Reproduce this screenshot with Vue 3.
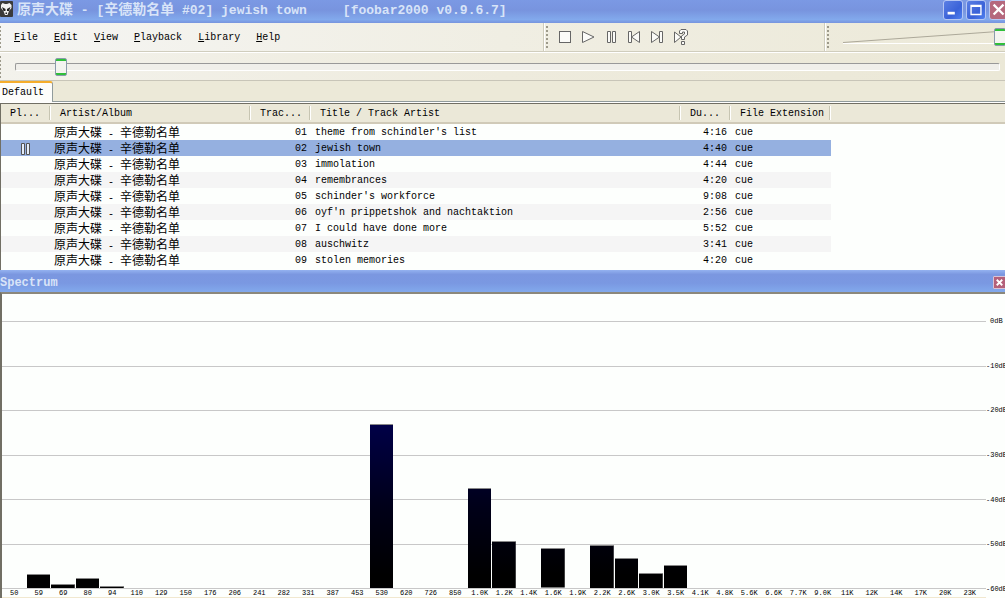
<script setup>
import { ref } from 'vue'

const menus = ['File', 'Edit', 'View', 'Playback', 'Library', 'Help']
const position = ref(4)
const volume = ref(100)

const tracks = [
  ['01', "theme from schindler's list", '4:16'],
  ['02', 'jewish town', '4:40'],
  ['03', 'immolation', '4:44'],
  ['04', 'remembrances', '4:20'],
  ['05', "schinder's workforce", '9:08'],
  ['06', "oyf'n prippetshok and nachtaktion", '2:56'],
  ['07', 'I could have done more', '5:52'],
  ['08', 'auschwitz', '3:41'],
  ['09', 'stolen memories', '4:20'],
]
const current = '02'

const labels = (
  '50 59 69 80 94 110 129 150 176 206 241 282 331 387 453 530 620 726 850 1.0K ' +
  '1.2K 1.4K 1.6K 1.9K 2.2K 2.6K 3.0K 3.5K 4.1K 4.8K 5.6K 6.6K 7.7K 9.0K 11K 12K 14K 17K 20K 23K'
).split(' ')
// Level of each sounding band, as a percentage of the 60 dB range
const levels = {
  59: 5.4, 69: 1.6, 80: 3.8, 94: 0.9, 530: 61.4, '1.0K': 37.6, '1.2K': 17.6,
  '1.6K': 14.8, '2.2K': 16.2, '2.6K': 11.4, '3.0K': 5.8, '3.5K': 8.7,
}
const decibels = ['0dB', '-10dB', '-20dB', '-30dB', '-40dB', '-50dB']
</script>

<template>
  <main class="window">
    <header class="titlebar">
      <svg class="logo" viewBox="0 0 13 16" aria-hidden="true">
        <rect width="13" height="16" rx="1" fill="#3a3a3a" />
        <path d="M1 4L2.500 2L5 3H7L9.500 2L11.500 4V7L9 10L7.500 14H5L3.500 10L1 7Z" fill="#f2f2f2" />
        <path d="M2 6L5.500 8V10H3.500ZM10.500 6L7 8V10H9ZM5.500 11.500h1.500v1.500h-1.500z" fill="#222" />
      </svg>
      <h1><span class="han">原声大碟</span> - [<span class="han">辛德勒名单</span> #02] jewish town<span class="app">[foobar2000 v0.9.6.7]</span></h1>
      <div class="controls">
        <button type="button" aria-label="Minimize">
          <svg viewBox="0 0 20 20"><path d="M4 12h8v3H4z" fill="#fff" /></svg>
        </button>
        <button type="button" aria-label="Maximize">
          <svg viewBox="0 0 20 20"><path d="M4.500 5h11v10h-11zM4.500 6h11" fill="none" stroke="#fff" stroke-width="1.5" /></svg>
        </button>
        <button type="button" class="close" aria-label="Close">
          <svg viewBox="0 0 20 20"><path d="M4 4l11 11M15 4l-11 11" stroke="#fff" stroke-width="2.5" /></svg>
        </button>
      </div>
    </header>

    <div class="bars">
      <nav class="menubar">
        <span class="grip"></span>
        <button v-for="m in menus" :key="m" type="button"><u>{{ m[0] }}</u>{{ m.slice(1) }}</button>
      </nav>
      <div class="playback">
        <span class="grip"></span>
        <button type="button" aria-label="Stop">
          <svg viewBox="0 0 23 18"><rect x="5.5" y="3.5" width="11" height="11" /></svg>
        </button>
        <button type="button" aria-label="Play">
          <svg viewBox="0 0 23 18"><path d="M5.500 3.500L17 9L5.500 14.500Z" /></svg>
        </button>
        <button type="button" aria-label="Pause">
          <svg viewBox="0 0 23 18"><path d="M7.500 3.500h3v11h-3zM12.500 3.500h3v11h-3z" /></svg>
        </button>
        <button type="button" aria-label="Previous">
          <svg viewBox="0 0 23 18"><path d="M5.500 3.500h3v11h-3zM16.500 3.500L8.500 9L16.500 14.500Z" /></svg>
        </button>
        <button type="button" aria-label="Next">
          <svg viewBox="0 0 23 18"><path d="M13.500 3.500h3v11h-3zM5.500 3.500L13.500 9L5.500 14.500Z" /></svg>
        </button>
        <button type="button" aria-label="Random">
          <svg viewBox="0 0 23 18">
            <path d="M5.500 4L12 9L5.500 14.500Z" />
            <path d="M10.500 5.500V3L12 1.500H17L18.500 3V7L15.500 9V11.500H12.500V8L15.500 6V4H13.500V5.500ZM12.500 13.500h3v3h-3z" />
          </svg>
        </button>
      </div>
      <div class="volume">
        <span class="grip"></span>
        <div class="wedge">
          <svg viewBox="0 0 162 20" preserveAspectRatio="none" aria-hidden="true">
            <path d="M0 16.500H162" stroke="#fff" />
            <path d="M0 15.500L162 4" stroke="#aca899" />
          </svg>
          <input v-model="volume" type="range" min="0" max="100" aria-label="Volume" />
        </div>
      </div>
    </div>

    <div class="seekbar">
      <span class="grip"></span>
      <input v-model="position" type="range" min="0" max="100" aria-label="Position" />
    </div>

    <div class="tabs" role="tablist">
      <button type="button" role="tab" aria-selected="true">Default</button>
    </div>

    <section class="playlist">
      <table>
        <colgroup>
          <col class="c-state" /><col class="c-artist" /><col class="c-no" /><col class="c-title" />
          <col class="c-time" /><col class="c-ext" /><col />
        </colgroup>
        <thead>
          <tr>
            <th>Pl...</th><th>Artist/Album</th><th>Trac...</th><th>Title / Track Artist</th>
            <th>Du...</th><th>File Extension</th><td></td>
          </tr>
        </thead>
        <tbody>
          <tr v-for="t in tracks" :key="t[0]" :class="{ current: t[0] === current }">
            <td class="state">
              <svg v-if="t[0] === current" viewBox="0 0 10 13" role="img" aria-label="Paused">
                <path d="M.5 .5h3v11h-3zM5.500 .5h3v11h-3z" fill="#e4edfa" stroke="#555" />
              </svg>
            </td>
            <td class="artist">原声大碟<i> - </i>辛德勒名单</td>
            <td class="num">{{ t[0] }}</td>
            <td>{{ t[1] }}</td>
            <td class="num">{{ t[2] }}</td>
            <td>cue</td>
            <td class="rest"></td>
          </tr>
        </tbody>
      </table>
    </section>

    <header class="paneltitle">
      <h2>Spectrum</h2>
      <button type="button" aria-label="Close Spectrum">
        <svg viewBox="0 0 12 12"><path d="M3 3l6 6M9 3l-6 6" stroke="#fff" stroke-width="2" /></svg>
      </button>
    </header>

    <section class="spectrum">
      <div class="grid"><span v-for="d in decibels" :key="d"></span></div>
      <div class="bands">
        <div v-for="l in labels" :key="l" class="band">
          <span v-if="levels[l]" :style="{ height: levels[l] + '%' }"></span>
        </div>
      </div>
      <div class="scale"><span v-for="d in decibels" :key="d">{{ d }}</span></div>
      <div class="freqs"><span v-for="l in labels" :key="l">{{ l }}</span></div>
      <div class="floor">-60dB</div>
    </section>
  </main>
</template>

<style>
body {
  margin: 0;
}
</style>

<style scoped>
.window {
  display: flex;
  flex-direction: column;
  height: 100vh;
  overflow: hidden;
  background: #ece9d8;
  color: #000;
  font: 10px/16px "Liberation Mono", "Noto Sans CJK SC", monospace;
}
.window * {
  box-sizing: border-box;
}
button {
  margin: 0;
  padding: 0;
  border: 0;
  background: none;
  color: inherit;
  font: inherit;
}
svg {
  display: block;
}

.titlebar {
  display: flex;
  flex: none;
  align-items: flex-start;
  height: 23px;
  background: linear-gradient(#7b99e4, #7894de 45%, #82a9ec 85%, #7794de);
  color: #d8e4f8;
}
.logo {
  flex: none;
  width: 13px;
  height: 16px;
  margin-top: 1px;
}
h1 {
  flex: 1;
  margin: 0 0 0 4px;
  font-size: 13px;
  line-height: 16px;
  white-space: nowrap;
}
.han {
  font-family: "Noto Sans CJK SC", sans-serif;
  font-size: 14px;
}
.app {
  margin-left: 36px;
}
.controls {
  display: flex;
  gap: 3px;
  margin-right: -4px;
}
.controls button {
  width: 20px;
  height: 20px;
  border: 1px solid #b4c6f4;
  border-radius: 3px;
  background: linear-gradient(135deg, #5b7fe4, #3a62d8 60%, #4f80f0);
}
.controls .close {
  background: #b5687d;
}

.bars {
  display: grid;
  flex: none;
  grid-template-columns: 543fr 281fr 181fr;
  height: 29px;
  border-bottom: 1px solid #d0cdbd;
  background: linear-gradient(90deg, #f5f5f3, #f0eee3 50%, #ece9d8);
}
.grip {
  flex: none;
  width: 2px;
  height: 22px;
  background: repeating-linear-gradient(#9d9a8b 0 2px, transparent 2px 4px);
}
.menubar {
  display: flex;
  gap: 16px;
  align-items: center;
  margin-left: -1px;
}
.menubar .grip {
  margin-right: -3px;
}
.menubar button {
  padding-top: 2px;
}
.playback {
  display: flex;
  align-items: center;
  padding-left: 2px;
  border-left: 1px solid #d0cdbd;
  box-shadow: inset 1px 0 #fff;
}
.playback .grip {
  margin-right: 6px;
}
.playback button svg {
  width: 23px;
  height: 18px;
  fill: #fbfbf8;
  stroke: #666;
}
.volume {
  display: flex;
  align-items: center;
  min-width: 0;
  padding-left: 2px;
  border-left: 1px solid #d0cdbd;
  box-shadow: inset 1px 0 #fff;
}
.volume .grip {
  margin-right: 14px;
}
.wedge {
  display: grid;
  flex: 1;
  min-width: 0;
  margin-right: -1px;
}
.wedge > * {
  grid-area: 1 / 1;
  width: 100%;
  height: 20px;
}

input {
  margin: 0;
  background: none;
  appearance: none;
}
input::-webkit-slider-thumb {
  width: 12px;
  height: 18px;
  border: 1px solid #8a9bab;
  border-radius: 2px;
  background: linear-gradient(#2fbf3a 0 2px, #f4f4f0 2px 14px, #2fbf3a 14px);
  appearance: none;
}
.seekbar {
  display: flex;
  flex: none;
  align-items: center;
  height: 29px;
  border-top: 1px solid #fff;
  border-bottom: 1px solid #c8c5b8;
  background: linear-gradient(90deg, #f3f2ec, #eeebdd 50%, #ebe8d7);
}
.seekbar .grip {
  width: 1px;
}
.seekbar input {
  flex: 1;
  height: 18px;
  margin: 0 5px 0 14px;
}
.seekbar input::-webkit-slider-runnable-track {
  height: 8px;
  border: 1px solid #999;
  border-right-color: #fff;
  border-bottom-color: #fff;
  border-radius: 2px;
  background: #f0efea;
}
.seekbar input::-webkit-slider-thumb {
  margin-top: -6px;
}

.tabs {
  display: flex;
  flex: none;
  height: 22px;
  border-bottom: 1px solid #fff;
  box-shadow: inset 0 -1px #919b9c;
}
.tabs button {
  padding: 0 8px 0 2px;
  border-top: 2px solid #f5ad2c;
  border-right: 1px solid #919b9c;
  border-radius: 0 3px 0 0;
  background: #fdfdfb;
}

.playlist {
  flex: none;
  height: 167px;
  border-top: 1px solid #716f64;
  border-left: 1px solid #716f64;
  background: #fdfffd;
}
table {
  width: 100%;
  border-spacing: 0;
  table-layout: fixed;
}
.c-state {
  width: 50px;
}
.c-artist {
  width: 200px;
}
.c-no {
  width: 60px;
}
.c-title {
  width: 370px;
}
.c-time {
  width: 50px;
}
.c-ext {
  width: 100px;
}
thead {
  background: #ebe8d8;
}
th,
td {
  height: 16px;
  padding: 2px 4px 0;
  overflow: hidden;
  line-height: 14px;
  white-space: nowrap;
}
thead tr > * {
  height: 20px;
  border-bottom: 2px solid #d0cab8;
}
th {
  padding: 2px 0 0 9px;
  background: linear-gradient(#c7c5b2, #c7c5b2) right 1px center / 1px 14px no-repeat,
    linear-gradient(#fff, #fff) right center / 1px 14px no-repeat;
  font-weight: normal;
  text-align: left;
}
tbody tr:nth-child(even) td {
  background: #f5f5f5;
}
tbody tr.current td {
  background: #95b0e0;
}
tbody tr td.rest {
  background: none;
}
.state svg {
  width: 10px;
  height: 13px;
  margin: 0 auto;
}
.artist {
  padding: 0 3px;
  font-family: "Noto Sans CJK SC", sans-serif;
  font-size: 12px;
}
.artist i {
  font: 10px "Liberation Mono", monospace;
  white-space: pre;
}
.num {
  text-align: right;
}

.paneltitle {
  display: flex;
  flex: none;
  align-items: center;
  justify-content: space-between;
  height: 22px;
  background: linear-gradient(#94b2f0, #7b97e0 20%, #7a98e2 60%, #82a9ec);
  color: #d8e4f8;
}
h2 {
  margin: 4px 0 0;
  font-size: 12px;
  line-height: 18px;
}
.paneltitle button {
  width: 13px;
  height: 13px;
  margin: 2px -1px 0 0;
  border: 1px solid #d9c2d4;
  border-radius: 1px;
  background: #b4607a;
}

.spectrum {
  display: grid;
  flex: 1;
  grid-template-rows: 1fr 9px;
  grid-template-columns: 1fr 19px;
  min-height: 0;
  padding-top: 27px;
  border: solid #716f64;
  border-width: 2px 0 0 2px;
  border-top-color: #8b887c;
  background: #fdfffd;
  font-size: 7px;
  line-height: 8px;
}
.grid,
.bands {
  display: grid;
  grid-area: 1 / 1;
  min-height: 0;
}
.grid {
  grid-auto-rows: 1fr;
  border-bottom: 1px solid #c8c8c8;
}
.grid span {
  border-top: 1px solid #c8c8c8;
}
.bands,
.freqs {
  display: grid;
  grid-template-columns: repeat(40, minmax(0, 1fr));
  padding-right: 4px;
}
.bands {
  padding-bottom: 1px;
}
.band {
  display: flex;
  align-items: flex-end;
  min-height: 0;
  padding-right: 1px;
}
.band span {
  width: 100%;
  border-top: 1px solid #888;
  background: linear-gradient(to top, #000 5%, #000018 30%, #000048 62%) bottom / 100% 267px;
}
.scale {
  display: grid;
  grid-auto-rows: 1fr;
}
.scale span {
  margin-top: -4px;
  white-space: nowrap;
}
.scale span:first-child {
  padding-left: 4px;
}
.freqs {
  border-bottom: 1px solid #f1e8cf;
  text-align: center;
}
.floor {
  margin-top: -4px;
  white-space: nowrap;
}
</style>
